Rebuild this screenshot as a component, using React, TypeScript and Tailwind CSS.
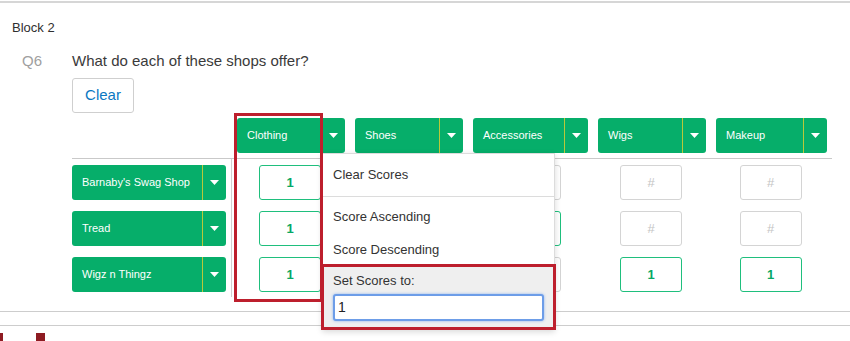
const green = "bg-[#06ae6a]";

type Col = { name: string; w: string; hidden?: boolean; cells: (string | null)[] };

const columns: Col[] = [
  { name: "Clothing", w: "w-[108px]", cells: ["1", "1", "1"] },
  // covered by the open menu
  { name: "Shoes", w: "w-[108px]", hidden: true, cells: [null, null, null] },
  { name: "Accessories", w: "w-[115px]", cells: [null, "1", null] },
  { name: "Wigs", w: "w-[108px]", cells: [null, null, "1"] },
  { name: "Makeup", w: "w-[111px]", cells: [null, null, "1"] },
];

const rows = ["Barnaby's Swag Shop", "Tread", "Wigz n Thingz"];

function Caret() {
  return (
    <svg width="9" height="5" viewBox="0 0 9 5" className="fill-white">
      <path d="M0 0h9L4.5 5z" />
    </svg>
  );
}

function SplitButton({ label, className }: { label: string; className: string }) {
  return (
    <div className={`${className} h-[35px] ${green} rounded-[3px] flex text-white text-[11px]`}>
      <div className="flex-1 flex items-center pl-[10px] border-r border-[#b9c93a]">{label}</div>
      <div className="w-[23px] flex items-center justify-center">
        <Caret />
      </div>
    </div>
  );
}

function ScoreBox({ value }: { value: string | null }) {
  return (
    <div
      className={
        value
          ? "w-[62px] h-[35px] rounded-[3px] border border-[#1fbf7d] flex items-center justify-center text-[13px] font-semibold text-[#07a865] bg-white"
          : "w-[62px] h-[35px] rounded-[3px] border border-[#d4d4d4] flex items-center justify-center text-[13px] text-[#c4c4c4] bg-white"
      }
    >
      {value ?? "#"}
    </div>
  );
}

export default function App() {
  return (
    <div
      className="relative w-[850px] h-[341px] overflow-hidden bg-white text-[#333]"
      style={{ fontFamily: "'Liberation Sans', Arial, sans-serif" }}
    >
      <div className="mt-px h-[2px] bg-[#d6d6d6]" />

      <div className="pl-[12px] pt-[17px] text-[13px] leading-[16px] text-[#2f2f2f]">Block 2</div>

      <div className="flex items-center mt-[15px] h-[20px]">
        <div className="w-[72px] pl-[22px] text-[15px] text-[#a0a0a0]">Q6</div>
        <div className="text-[15px] text-[#3a3a3a]">What do each of these shops offer?</div>
      </div>

      <div className="pl-[72px] mt-[7px]">
        <div className="w-[62px] h-[35px] border border-[#cfcfcf] rounded-[3px] flex items-center justify-center text-[15px] text-[#0b78c2]">
          Clear
        </div>
      </div>

      {/* matrix */}
      <div className="pl-[72px] mt-[5px]">
        <div className="flex h-[35px] pl-[165px] gap-[10px]">
          {columns.map((c) => (
            <SplitButton key={c.name} label={c.name} className={c.w} />
          ))}
        </div>
        <div className="mt-[5px] w-[760px] h-px bg-[#c9c9c9]" />
        <div className="flex">
          <div className="w-[160px] flex flex-col gap-[11px] pt-[6px] pr-[6px] border-r border-[#d0d0d0] pb-[5px]">
            {rows.map((r) => (
              <SplitButton key={r} label={r} className="w-[154px]" />
            ))}
          </div>
          <div className="flex pl-[4px] gap-[10px] pt-[6px]">
            {columns.map((c) => (
              <div
                key={c.name}
                className={`${c.w} flex flex-col items-center gap-[11px] ${c.hidden ? "invisible" : ""}`}
              >
                {c.cells.map((v, i) => (
                  <ScoreBox key={i} value={v} />
                ))}
              </div>
            ))}
          </div>
        </div>
      </div>

      <div className="mt-[14px] h-px bg-[#cdcdcd]" />
      <div className="mt-[13px] h-px bg-[#cdcdcd]" />
      <div className="flex mt-[7px] h-[8px]">
        <div className="w-[3px] bg-[#8e1b22]" />
        <div className="ml-[33px] w-[9px] bg-[#8e1b22]" />
      </div>

      {/* dropdown menu */}
      <div className="absolute left-[322px] top-[153px] w-[233px] bg-white border border-[#dcdcdc] shadow-[0_2px_6px_rgba(0,0,0,0.15)] text-[13px] text-[#333]">
        <div className="h-[42px] flex items-center pl-[10px]">Clear Scores</div>
        <div className="h-px bg-[#dcdcdc] mb-[3px]" />
        <div className="h-[33px] flex items-center pl-[10px]">Score Ascending</div>
        <div className="h-[33px] flex items-center pl-[10px]">Score Descending</div>
        <div className="bg-[#efefef] pt-[7px] pb-[8px] px-[10px]">
          <div className="leading-[16px]">Set Scores to:</div>
          <div className="mt-[5px] h-[27px] bg-white border-2 border-[#6d9de8] rounded-[3px] shadow-[0_0_3px_#8fb5f0] flex items-center pl-[3px] text-[14px] text-[#222]">
            1
          </div>
        </div>
      </div>

      {/* annotation boxes */}
      <div className="absolute left-[234px] top-[113px] w-[89px] h-[189px] border-[3px] border-[#bd1f2d]" />
      <div className="absolute left-[321px] top-[264px] w-[235px] h-[66px] border-[3px] border-[#bd1f2d]" />
    </div>
  );
}
